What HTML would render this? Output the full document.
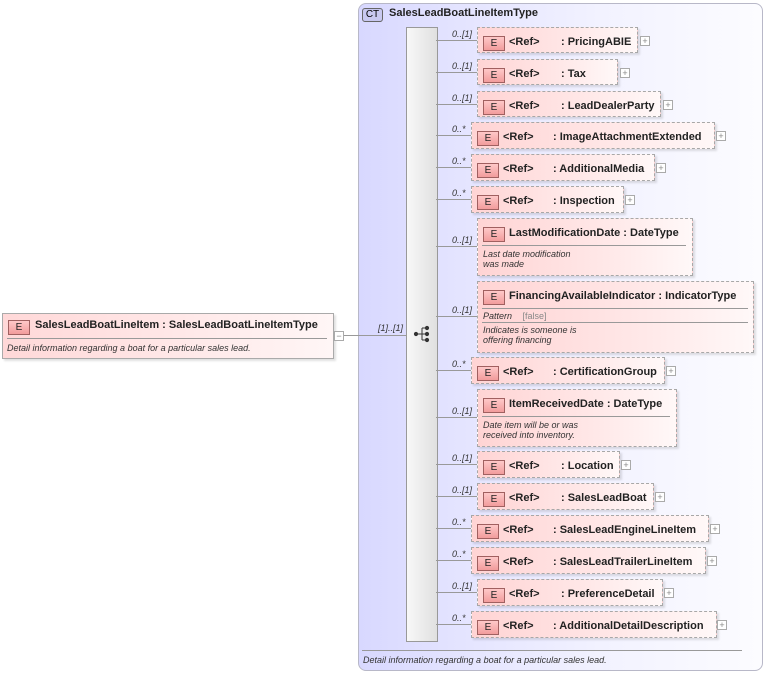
<!DOCTYPE html>
<html><head><meta charset="utf-8"><style>
body{margin:0;width:766px;height:674px;background:#fff;position:relative;font-family:"Liberation Sans",Arial,sans-serif;overflow:hidden}
.a{position:absolute}
.ct{left:358px;top:3px;width:403px;height:666px;border:1px solid #b8b8c8;border-radius:8px;background:linear-gradient(90deg,#d8d8ff 0%,#e4e4ff 25%,#f2f2ff 60%,#fcfcff 100%)}
.seq{left:406px;top:27px;width:30px;height:613px;border:1px solid #999;background:linear-gradient(90deg,#f8f8f8,#e0e0e0);}
.box{position:absolute;border:1px dashed #a8a8a8;background:linear-gradient(90deg,#ffd4d4,#ffe8e8 60%,#fff8f8);box-shadow:2px 2px 2px rgba(0,0,0,.12);font-size:11px;font-weight:bold;color:#222}
.box>span{top:8px!important}
.e{position:absolute;left:5px;top:8px;width:20px;height:13px;border:1px solid #a06060;background:linear-gradient(#ffc8c8,#f29c9c);font-size:10px;font-weight:normal;text-align:center;line-height:13px;color:#222}
.ln{position:absolute;height:1px;background:#999}
.m{position:absolute;font-size:9px;font-style:italic;color:#333}
.pl{position:absolute;width:8px;height:8px;border:1px solid #aaa;background:#fff;font-size:9px;line-height:8px;text-align:center;color:#888}
.d{position:absolute;font-size:9px;font-style:italic;color:#333;font-weight:normal;line-height:10px}
.hr{position:absolute;height:1px;background:#999}
</style></head><body>
<div class="a ct"></div>
<div class="a" style="left:362px;top:8px;width:19px;height:12px;border:1px solid #666;border-radius:3px;background:#c8c8f0;font-size:10px;text-align:center;line-height:12px">CT</div>
<div class="a" style="left:389px;top:7px;font-size:11px;font-weight:bold;color:#222">SalesLeadBoatLineItemType</div>
<div class="a seq"></div>
<div class="hr" style="left:362px;top:650px;width:380px"></div>
<div class="d" style="left:363px;top:655px">Detail information regarding a boat for a particular sales lead.</div>

<!-- main -->
<div class="box" style="left:2px;top:313px;width:330px;height:44px;border:1px solid #aaa;background:linear-gradient(90deg,#ffd8d8,#ffeaea 60%,#fff6f6)">
<div class="e" style="top:6px">E</div>
<div class="a" style="left:32px;top:5px;font-size:11px">SalesLeadBoatLineItem : SalesLeadBoatLineItemType</div>
<div class="hr" style="left:4px;top:24px;width:320px"></div>
<div class="d" style="left:4px;top:29px">Detail information regarding a boat for a particular sales lead.</div>
</div>
<div class="pl" style="left:334px;top:331px">−</div>
<div class="ln" style="left:344px;top:335px;width:62px"></div>
<div class="m" style="left:378px;top:323px">[1]..[1]</div>
<svg class="a" style="left:413px;top:325px" width="20" height="20"><g fill="#333" stroke="#333"><circle cx="3" cy="9" r="1.6"/><line x1="3" y1="9" x2="9" y2="9"/><line x1="9" y1="3" x2="9" y2="15"/><line x1="9" y1="3" x2="14" y2="3"/><line x1="9" y1="9" x2="14" y2="9"/><line x1="9" y1="15" x2="14" y2="15"/><circle cx="14" cy="3" r="1.6"/><circle cx="14" cy="9" r="1.6"/><circle cx="14" cy="15" r="1.6"/></g></svg>

<!-- refs -->
<div class="ln" style="left:436px;top:40px;width:41px"></div><div class="m" style="left:452px;top:29px">0..[1]</div>
<div class="box" style="left:477px;top:27px;width:159px;height:24px"><div class="e">E</div><span class="a" style="left:31px;top:5px">&lt;Ref&gt;</span><span class="a" style="left:83px;top:5px">: PricingABIE</span></div><div class="pl" style="left:640px;top:36px">+</div>

<div class="ln" style="left:436px;top:72px;width:41px"></div><div class="m" style="left:452px;top:61px">0..[1]</div>
<div class="box" style="left:477px;top:59px;width:139px;height:24px"><div class="e">E</div><span class="a" style="left:31px;top:5px">&lt;Ref&gt;</span><span class="a" style="left:83px;top:5px">: Tax</span></div><div class="pl" style="left:620px;top:68px">+</div>

<div class="ln" style="left:436px;top:104px;width:41px"></div><div class="m" style="left:452px;top:93px">0..[1]</div>
<div class="box" style="left:477px;top:91px;width:182px;height:24px"><div class="e">E</div><span class="a" style="left:31px;top:5px">&lt;Ref&gt;</span><span class="a" style="left:83px;top:5px">: LeadDealerParty</span></div><div class="pl" style="left:663px;top:100px">+</div>

<div class="ln" style="left:436px;top:135px;width:35px"></div><div class="m" style="left:452px;top:124px">0..*</div>
<div class="box" style="left:471px;top:122px;width:242px;height:25px"><div class="e">E</div><span class="a" style="left:31px;top:5px">&lt;Ref&gt;</span><span class="a" style="left:81px;top:5px">: ImageAttachmentExtended</span></div><div class="pl" style="left:716px;top:131px">+</div>

<div class="ln" style="left:436px;top:167px;width:35px"></div><div class="m" style="left:452px;top:156px">0..*</div>
<div class="box" style="left:471px;top:154px;width:182px;height:25px"><div class="e">E</div><span class="a" style="left:31px;top:5px">&lt;Ref&gt;</span><span class="a" style="left:81px;top:5px">: AdditionalMedia</span></div><div class="pl" style="left:656px;top:163px">+</div>

<div class="ln" style="left:436px;top:199px;width:35px"></div><div class="m" style="left:452px;top:188px">0..*</div>
<div class="box" style="left:471px;top:186px;width:151px;height:25px"><div class="e">E</div><span class="a" style="left:31px;top:5px">&lt;Ref&gt;</span><span class="a" style="left:81px;top:5px">: Inspection</span></div><div class="pl" style="left:625px;top:195px">+</div>

<div class="ln" style="left:436px;top:246px;width:41px"></div><div class="m" style="left:452px;top:235px">0..[1]</div>
<div class="box" style="left:477px;top:218px;width:214px;height:56px"><div class="e">E</div><span class="a" style="left:31px;top:5px">LastModificationDate : DateType</span><div class="hr" style="left:4px;top:26px;width:204px"></div><div class="d" style="left:5px;top:30px">Last date modification<br>was made</div></div>

<div class="ln" style="left:436px;top:316px;width:41px"></div><div class="m" style="left:452px;top:305px">0..[1]</div>
<div class="box" style="left:477px;top:281px;width:275px;height:70px"><div class="e">E</div><span class="a" style="left:31px;top:5px">FinancingAvailableIndicator : IndicatorType</span><div class="hr" style="left:4px;top:26px;width:266px"></div><div class="d" style="left:5px;top:29px">Pattern <span style="color:#888;font-style:normal;margin-left:8px">[false]</span></div><div class="hr" style="left:4px;top:40px;width:266px"></div><div class="d" style="left:5px;top:43px">Indicates is someone is<br>offering financing</div></div>

<div class="ln" style="left:436px;top:370px;width:35px"></div><div class="m" style="left:452px;top:359px">0..*</div>
<div class="box" style="left:471px;top:357px;width:192px;height:25px"><div class="e">E</div><span class="a" style="left:31px;top:5px">&lt;Ref&gt;</span><span class="a" style="left:81px;top:5px">: CertificationGroup</span></div><div class="pl" style="left:666px;top:366px">+</div>

<div class="ln" style="left:436px;top:417px;width:41px"></div><div class="m" style="left:452px;top:406px">0..[1]</div>
<div class="box" style="left:477px;top:389px;width:198px;height:56px"><div class="e">E</div><span class="a" style="left:31px;top:5px">ItemReceivedDate : DateType</span><div class="hr" style="left:4px;top:26px;width:188px"></div><div class="d" style="left:5px;top:30px">Date item will be or was<br>received into inventory.</div></div>

<div class="ln" style="left:436px;top:464px;width:41px"></div><div class="m" style="left:452px;top:453px">0..[1]</div>
<div class="box" style="left:477px;top:451px;width:141px;height:25px"><div class="e">E</div><span class="a" style="left:31px;top:5px">&lt;Ref&gt;</span><span class="a" style="left:83px;top:5px">: Location</span></div><div class="pl" style="left:621px;top:460px">+</div>

<div class="ln" style="left:436px;top:496px;width:41px"></div><div class="m" style="left:452px;top:485px">0..[1]</div>
<div class="box" style="left:477px;top:483px;width:175px;height:25px"><div class="e">E</div><span class="a" style="left:31px;top:5px">&lt;Ref&gt;</span><span class="a" style="left:83px;top:5px">: SalesLeadBoat</span></div><div class="pl" style="left:655px;top:492px">+</div>

<div class="ln" style="left:436px;top:528px;width:35px"></div><div class="m" style="left:452px;top:517px">0..*</div>
<div class="box" style="left:471px;top:515px;width:236px;height:25px"><div class="e">E</div><span class="a" style="left:31px;top:5px">&lt;Ref&gt;</span><span class="a" style="left:81px;top:5px">: SalesLeadEngineLineItem</span></div><div class="pl" style="left:710px;top:524px">+</div>

<div class="ln" style="left:436px;top:560px;width:35px"></div><div class="m" style="left:452px;top:549px">0..*</div>
<div class="box" style="left:471px;top:547px;width:233px;height:25px"><div class="e">E</div><span class="a" style="left:31px;top:5px">&lt;Ref&gt;</span><span class="a" style="left:81px;top:5px">: SalesLeadTrailerLineItem</span></div><div class="pl" style="left:707px;top:556px">+</div>

<div class="ln" style="left:436px;top:592px;width:41px"></div><div class="m" style="left:452px;top:581px">0..[1]</div>
<div class="box" style="left:477px;top:579px;width:184px;height:25px"><div class="e">E</div><span class="a" style="left:31px;top:5px">&lt;Ref&gt;</span><span class="a" style="left:83px;top:5px">: PreferenceDetail</span></div><div class="pl" style="left:664px;top:588px">+</div>

<div class="ln" style="left:436px;top:624px;width:35px"></div><div class="m" style="left:452px;top:613px">0..*</div>
<div class="box" style="left:471px;top:611px;width:244px;height:25px"><div class="e">E</div><span class="a" style="left:31px;top:5px">&lt;Ref&gt;</span><span class="a" style="left:81px;top:5px">: AdditionalDetailDescription</span></div><div class="pl" style="left:717px;top:620px">+</div>
</body></html>
